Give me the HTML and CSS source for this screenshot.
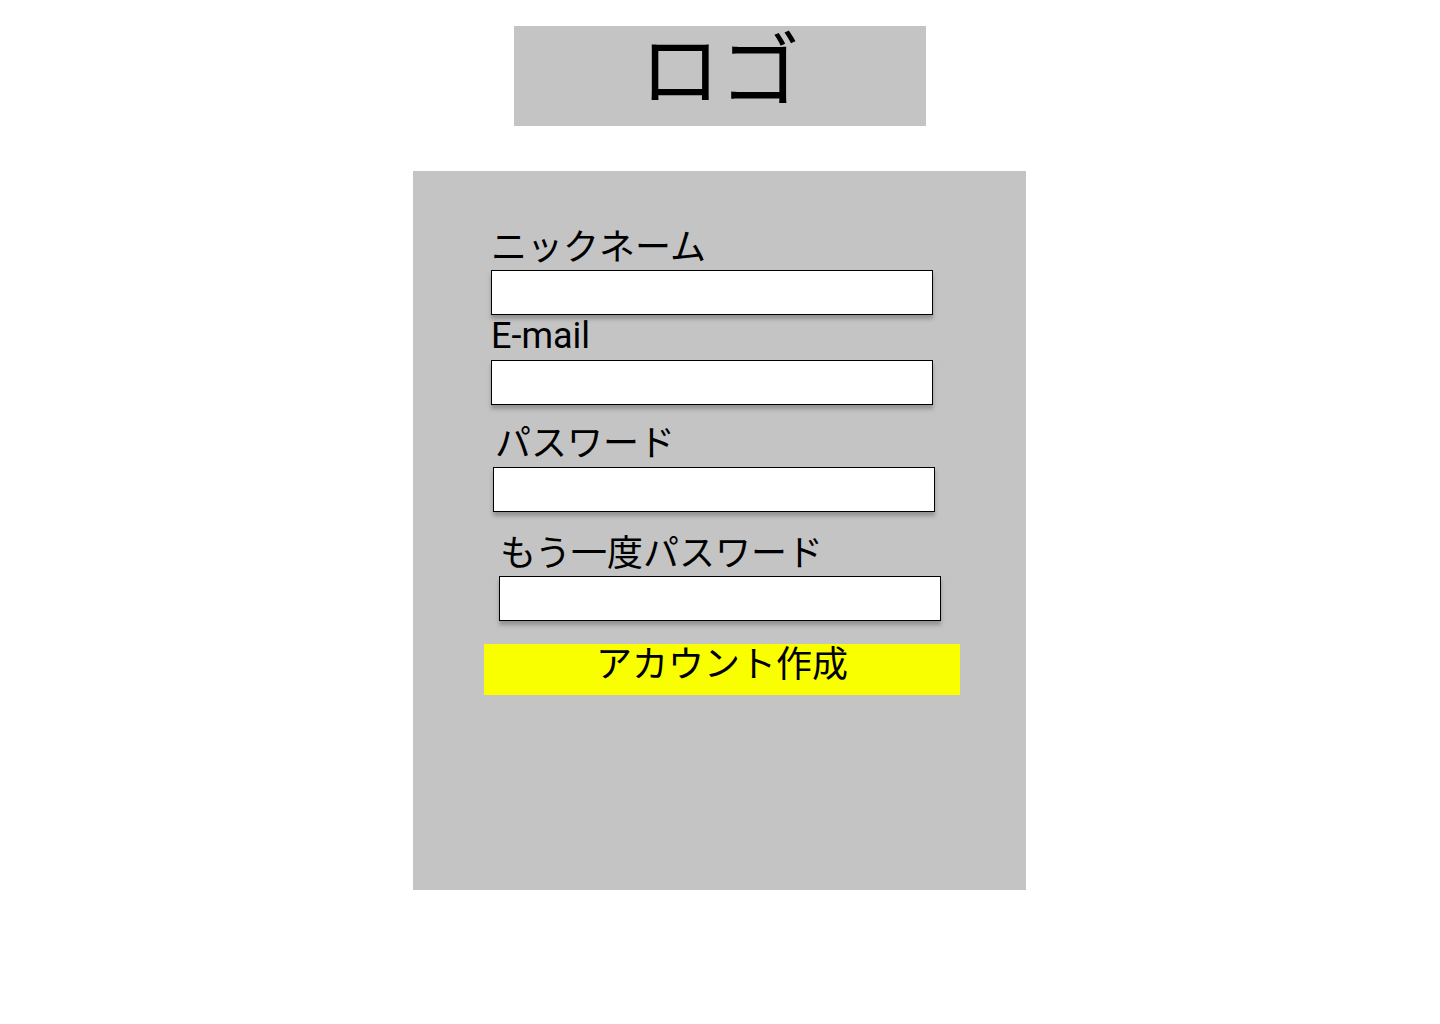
FILE: index.html
```html
<!DOCTYPE html>
<html lang="ja">
<head>
<meta charset="utf-8">
<title>アカウント作成</title>
<link rel="stylesheet" href="styles.css">
</head>
<body>
<header class="logo">ロゴ</header>
<main class="panel">
  <form class="form">
    <label class="label label-nick" for="nick">ニックネーム</label>
    <input class="input input-nick" id="nick" type="text">
    <label class="label label-mail" for="mail">E-mail</label>
    <input class="input input-mail" id="mail" type="email">
    <label class="label label-pass" for="pass">パスワード</label>
    <input class="input input-pass" id="pass" type="password">
    <label class="label label-pass2" for="pass2">もう一度パスワード</label>
    <input class="input input-pass2" id="pass2" type="password">
    <button class="submit" type="button">アカウント作成</button>
  </form>
</main>
</body>
</html>
```

FILE: styles.css
```css
html, body {
  margin: 0;
  padding: 0;
  background: #ffffff;
}
body {
  font-family: "Noto Sans CJK JP", "Noto Sans", sans-serif;
  color: #000000;
}
.logo {
  width: 412px;
  height: 100px;
  margin: 26px auto 0;
  background: #c4c4c4;
  font-size: 80px;
  line-height: 76px;
  text-align: center;
  box-sizing: border-box;
}
.panel {
  width: 613px;
  height: 719px;
  margin: 45px 0 0 calc(50% - 307px);
  background: #c4c4c4;
  box-sizing: border-box;
  padding-top: 53px;
}
.form {
  display: flex;
  flex-direction: column;
  align-items: flex-start;
}
.label {
  display: block;
  font-size: 36px;
  line-height: 40px;
  height: 40px;
}
.input {
  display: block;
  width: 442px;
  height: 45px;
  box-sizing: border-box;
  border: 1px solid #000000;
  background: #ffffff;
  box-shadow: 0 4px 4px rgba(0, 0, 0, 0.25);
  padding: 0 8px;
  font-family: inherit;
  font-size: 20px;
  outline: none;
}
.label-nick { margin-left: 78px; }
.input-nick { margin-left: 78px; margin-top: 6px; }
.label-mail {
  font-family: "Roboto", "Noto Sans CJK JP", sans-serif;
  line-height: 47px;
  margin-left: 78px;
  margin-top: -2px;
}
.input-mail { margin-left: 78px; margin-top: 7px; }
.label-pass { margin-left: 82px; margin-top: 15px; }
.input-pass { margin-left: 80px; margin-top: 7px; }
.label-pass2 { margin-left: 87px; margin-top: 18px; }
.input-pass2 { margin-left: 86px; margin-top: 6px; }
.submit {
  margin-left: 71px;
  margin-top: 23px;
  width: 476px;
  height: 51px;
  border: none;
  padding: 0;
  background: #faff00;
  font-family: inherit;
  font-size: 36px;
  line-height: 34px;
  color: #000000;
  display: flex;
  align-items: flex-start;
  justify-content: center;
}
```
